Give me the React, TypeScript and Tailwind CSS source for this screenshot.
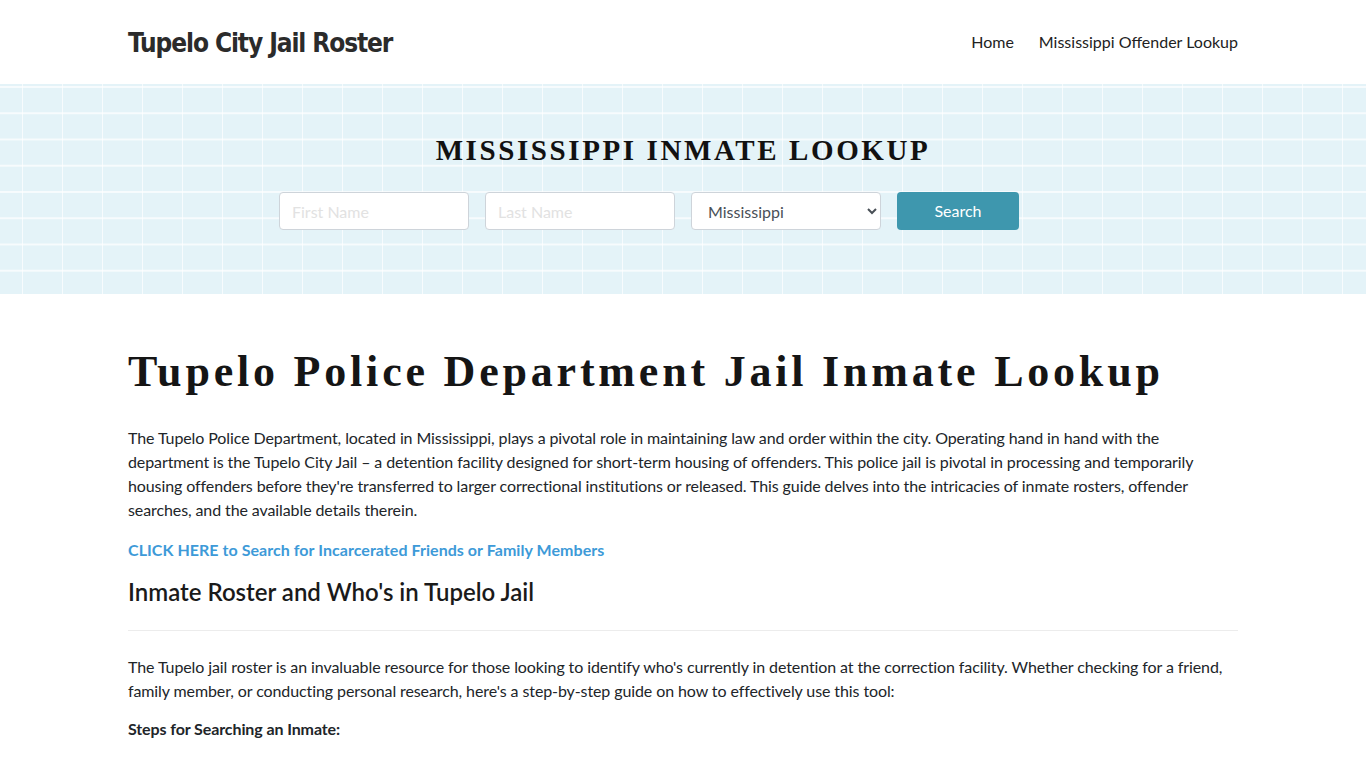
import React from "react";

const body = "font-['Lato','Noto_Sans',sans-serif]";

function Header() {
  return (
    <header className="h-[84px] bg-white">
      <div className="mx-auto flex h-full w-[1110px] items-center justify-between">
        <a className="pt-[3px] font-['DejaVu_Sans_Condensed','DejaVu_Sans',sans-serif] font-stretch-condensed text-[26px] font-bold tracking-[-1.1px] text-[#2b2b2b]">
          Tupelo City Jail Roster
        </a>
        <nav className={`${body} flex items-center gap-[25px] text-[16px] text-[#222]`}>
          <a>Home</a>
          <a>Mississippi Offender Lookup</a>
        </nav>
      </div>
    </header>
  );
}

function Hero() {
  return (
    <section className="h-[210px] bg-[#e4f3f8] bg-[linear-gradient(to_right,rgba(255,255,255,0.7)_1.5px,transparent_1.5px),linear-gradient(to_bottom,rgba(255,255,255,0.7)_1.5px,transparent_1.5px)] bg-[length:40px_26.25px] bg-[position:22px_2px]">
      <div className="mx-auto w-[1110px] pt-[48px]">
        <h2 className="text-center font-['Liberation_Serif',serif] text-[29px] font-bold leading-[36px] tracking-[2.6px] text-[#111]">
          MISSISSIPPI INMATE LOOKUP
        </h2>
        <form className={`${body} mt-[24px] flex gap-[16px] pl-[151px] text-[16px]`}>
          <input
            placeholder="First Name"
            className="h-[38px] w-[190px] rounded-[4px] border border-[#ced4da] bg-white px-3 placeholder:text-[#e2e2e2] outline-none"
          />
          <input
            placeholder="Last Name"
            className="h-[38px] w-[190px] rounded-[4px] border border-[#ced4da] bg-white px-3 placeholder:text-[#e2e2e2] outline-none"
          />
          <select
            defaultValue="Mississippi"
            className="h-[38px] w-[190px] rounded-[4px] border border-[#ced4da] bg-white pl-[12px] pr-2 text-[#495057] outline-none"
          >
            <option>Mississippi</option>
          </select>
          <button
            type="button"
            className="h-[38px] w-[122px] rounded-[4px] bg-[#3e97ae] text-[16px] text-white"
          >
            Search
          </button>
        </form>
      </div>
    </section>
  );
}

export default function App() {
  return (
    <div className={`${body} min-h-screen bg-white text-[#212529]`}>
      <Header />
      <Hero />
      <main className="mx-auto w-[1110px] pt-[52px] text-[16px] leading-[24px] tracking-[-0.1px]">
        <h1 className="font-['Liberation_Serif',serif] text-[44px] font-bold leading-[52px] tracking-[3.8px] text-[#151515]">
          Tupelo Police Department Jail Inmate Lookup
        </h1>
        <p className="mt-[28px]">
          The Tupelo Police Department, located in Mississippi, plays a pivotal role in maintaining law and order within the city. Operating hand in hand with the department is the Tupelo City Jail – a detention facility designed for short-term housing of offenders. This police jail is pivotal in processing and temporarily housing offenders before they're transferred to larger correctional institutions or released. This guide delves into the intricacies of inmate rosters, offender searches, and the available details therein.
        </p>
        <p className="mt-[16px]">
          <a className="font-bold tracking-[0.05px] text-[#3d9ad8]">CLICK HERE to Search for Incarcerated Friends or Family Members</a>
        </p>
        <h2 className="mt-[14px] text-[24px] font-semibold leading-[32px] tracking-normal text-[#1a1a1a]">
          Inmate Roster and Who's in Tupelo Jail
        </h2>
        <hr className="mt-[22px] border-t border-[#ececec]" />
        <p className="mt-[24px]">
          The Tupelo jail roster is an invaluable resource for those looking to identify who's currently in detention at the correction facility. Whether checking for a friend, family member, or conducting personal research, here's a step-by-step guide on how to effectively use this tool:
        </p>
        <p className="mt-[14px] font-bold">Steps for Searching an Inmate:</p>
      </main>
    </div>
  );
}
